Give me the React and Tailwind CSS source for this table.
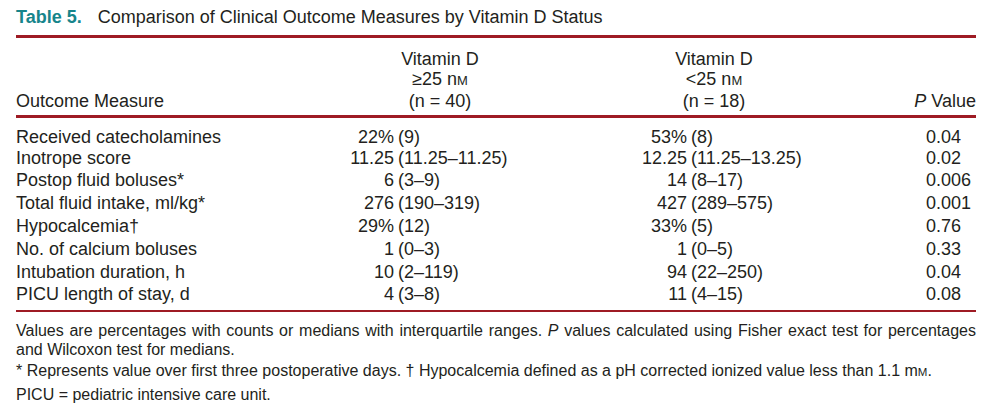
import React from "react";

const rows = [
  { label: "Received catecholamines", a: ["22%", "(9)"], b: ["53%", "(8)"], p: "0.04", h: "h-[20px]" },
  { label: "Inotrope score", a: ["11.25", "(11.25–11.25)"], b: ["12.25", "(11.25–13.25)"], p: "0.02", h: "h-[21px]" },
  { label: "Postop fluid boluses*", a: ["6", "(3–9)"], b: ["14", "(8–17)"], p: "0.006", h: "h-[23px]" },
  { label: "Total fluid intake, ml/kg*", a: ["276", "(190–319)"], b: ["427", "(289–575)"], p: "0.001", h: "h-[23px]" },
  { label: "Hypocalcemia†", a: ["29%", "(12)"], b: ["33%", "(5)"], p: "0.76", h: "h-[23px]" },
  { label: "No. of calcium boluses", a: ["1", "(0–3)"], b: ["1", "(0–5)"], p: "0.33", h: "h-[23px]" },
  { label: "Intubation duration, h", a: ["10", "(2–119)"], b: ["94", "(22–250)"], p: "0.04", h: "h-[23px]" },
  { label: "PICU length of stay, d", a: ["4", "(3–8)"], b: ["11", "(4–15)"], p: "0.08", h: "h-[22px]" },
];

// small caps "M" used for nM / mM
const SmallM = () => <span className="text-[0.72em]">M</span>;

const App = () => {
  return (
    <div className="w-[993px] h-[407px] bg-white px-[16px] text-[#231f20] font-['Liberation_Sans',Arial,sans-serif] overflow-hidden">
      <div className="w-[960px]">
        {/* title */}
        <div className="h-[35px] text-[18px] leading-[34px] whitespace-nowrap">
          <span className="font-bold text-[#17858b]">Table 5.</span>
          <span className="ml-[16px]">Comparison of Clinical Outcome Measures by Vitamin D Status</span>
        </div>
        <div className="h-[3px] bg-[#9e1b24]"></div>

        {/* header */}
        <div className="grid grid-cols-[300px_248px_300px_112px] pt-[11px] pb-[4px] text-[18px] leading-[20px]">
          <div className="flex items-end">Outcome Measure</div>
          <div className="text-center">
            <div>Vitamin D</div>
            <div>≥25 n<SmallM /></div>
            <div>(n = 40)</div>
          </div>
          <div className="text-center">
            <div>Vitamin D</div>
            <div>&lt;25 n<SmallM /></div>
            <div>(n = 18)</div>
          </div>
          <div className="flex items-end justify-end">
            <span>
              <i>P</i> Value
            </span>
          </div>
        </div>
        <div className="h-[3px] bg-[#9e1b24]"></div>

        {/* body */}
        <div className="pt-[9px] text-[18px]">
          {rows.map((r) => (
            <div
              key={r.label}
              className={`grid grid-cols-[300px_248px_300px_112px] items-center leading-[20px] whitespace-nowrap ${r.h}`}
            >
              <div>{r.label}</div>
              <div className="flex">
                <span className="w-[78px] text-right">{r.a[0]}</span>
                <span className="ml-[4px]">{r.a[1]}</span>
              </div>
              <div className="flex">
                <span className="w-[123px] text-right">{r.b[0]}</span>
                <span className="ml-[4px]">{r.b[1]}</span>
              </div>
              <div className="pl-[62px]">{r.p}</div>
            </div>
          ))}
        </div>
        <div className="mt-[5px] h-[2px] bg-[#9e1b24]"></div>

        {/* footnotes */}
        <div className="text-[16px] leading-[19px]">
          <div className="mt-[9px]">
            <div className="text-justify [text-align-last:justify] whitespace-nowrap">
              Values are percentages with counts or medians with interquartile ranges. <i>P</i> values calculated using
              Fisher exact test for percentages
            </div>
            <div>and Wilcoxon test for medians.</div>
          </div>
          <p className="mt-[2px]">
            * Represents value over first three postoperative days. † Hypocalcemia defined as a pH corrected ionized
            value less than 1.1 m<SmallM />.
          </p>
          <p className="mt-[3px]">PICU = pediatric intensive care unit.</p>
        </div>
      </div>
    </div>
  );
};

export default App;
